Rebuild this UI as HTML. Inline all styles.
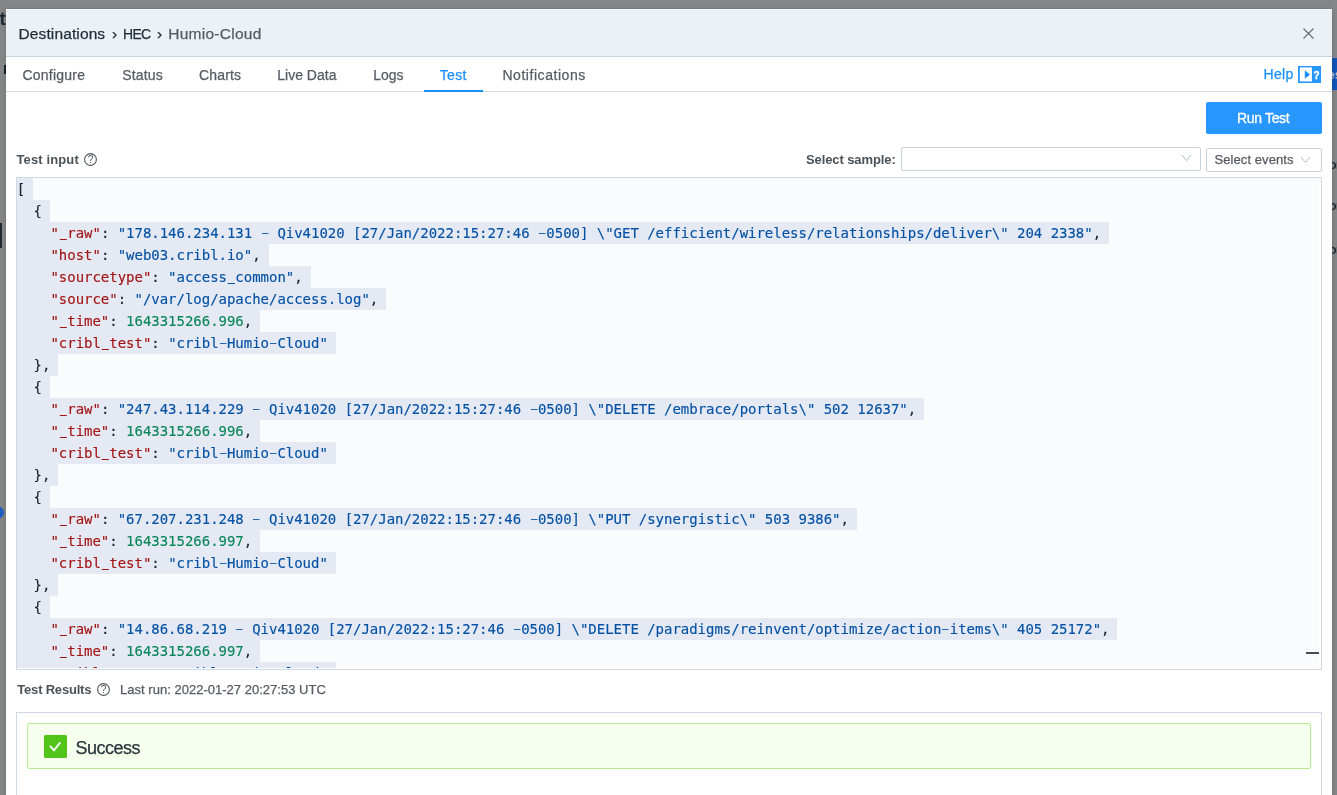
<!DOCTYPE html>
<html lang="en">
<head>
<meta charset="utf-8">
<title>Destinations › HEC › Humio-Cloud</title>
<style>
html,body{margin:0;padding:0;}
body{width:1337px;height:795px;overflow:hidden;background:#838587;font-family:"Liberation Sans",sans-serif;color:#4a5359;position:relative;}
.abs{position:absolute;white-space:nowrap;}
#modal{position:absolute;left:6px;top:9px;width:1326px;height:800px;background:#fff;border-radius:2px 2px 0 0;box-shadow:0 0 3px rgba(0,0,0,0.22);}
.bg{position:absolute;}
#hdr{position:absolute;left:0;top:0;width:1326px;height:47px;background:#ecf1f5;border-bottom:1px solid #c9d5e1;}
#tabs{position:absolute;left:0;top:48px;width:1326px;height:34px;border-bottom:1px solid #d0dae4;}
.t{position:absolute;white-space:nowrap;line-height:1;-webkit-text-stroke:0.25px currentColor;}
.title{font-size:15.5px;top:16.5px;color:#1f2c38;}
.tab{font-size:14px;top:59px;color:#555c63;}
#ink{position:absolute;left:418px;top:81px;width:59px;height:2px;background:#1890ff;}
#run{position:absolute;left:1200px;top:93px;width:116px;height:32px;background:#2896ff;border-radius:2px;color:#fff;font-size:14px;text-align:center;line-height:32px;letter-spacing:-0.35px;padding-right:1.6px;box-sizing:border-box;-webkit-text-stroke:0.3px #fff;}
.lbl{font-size:13px;font-weight:bold;color:#4a5359;-webkit-text-stroke:0 !important;}
.selbox{position:absolute;height:22px;border:1px solid #c6d2de;border-radius:2px;background:#fff;}
#editor{position:absolute;left:10px;top:168px;width:1304px;height:491px;border:1px solid #cfd9e3;background:#fff;overflow:hidden;}
#mon{position:absolute;left:0;top:0;width:1302px;height:490px;background:#fafbfd;overflow:hidden;}
#editor .sel{position:absolute;left:0;height:22px;background:#e5e9f3;display:block;}
#editor .ln{position:absolute;left:-0.2px;height:22px;line-height:22px;white-space:pre;font-family:"DejaVu Sans Mono","Liberation Mono",monospace;font-size:14px;letter-spacing:-0.024px;color:#1a1a1a;-webkit-text-stroke:0.14px currentColor;}
.u{font-weight:normal;display:inline-block;position:relative;top:-1.6px;transform:scaleX(0.78);-webkit-text-stroke:0.5px currentColor}.h{font-weight:normal;display:inline-block;position:relative;top:-1px;transform:scale(1.83,0.8);-webkit-text-stroke:0}
.k{color:#a31515}.s{color:#0451a5}.n{color:#098658}.d{color:#1d2228}
#results{position:absolute;left:10px;top:703px;width:1304px;height:120px;border:1px solid #cfd9e3;background:#fff;}
#alert{position:absolute;left:21px;top:714px;width:1282px;height:44px;border:1px solid #b7eb8f;background:#f6ffed;border-radius:2px;}
</style>
</head>
<body>
<div id="bgl" style="position:absolute;left:0;top:0;width:1337px;height:795px;will-change:transform">
<div class="bg" style="left:-30px;width:35.8px;text-align:right;top:8.5px;font-size:19px;font-weight:bold;color:#1c2a35;line-height:1;white-space:nowrap">t</div>
<div class="bg" style="left:4px;top:65px;width:2px;height:9px;background:#16242e"></div>
<div class="bg" style="left:0;top:223px;width:1.5px;height:25px;background:#1d2b35"></div>
<div class="bg" style="left:-9px;top:506px;width:13px;height:13px;border-radius:50%;background:#1f5fc4"></div>
<div class="bg" style="left:1332px;top:58px;width:5px;height:32px;background:#1253b5"></div>
<div class="bg" style="left:1327.5px;top:67.5px;font-size:13px;font-weight:bold;color:#b9bec6;line-height:1;white-space:nowrap">es</div>
<div class="bg" style="left:1329.2px;letter-spacing:-0.6px;top:159.2px;font-size:12px;font-weight:bold;color:#1c2a35;line-height:1;white-space:nowrap">on</div>
<div class="bg" style="left:1329.2px;letter-spacing:-0.6px;top:199.5px;font-size:12px;font-weight:bold;color:#1c2a35;line-height:1;white-space:nowrap">on</div>
<div class="bg" style="left:1329.2px;letter-spacing:-0.6px;top:244.3px;font-size:12px;font-weight:bold;color:#1c2a35;line-height:1;white-space:nowrap">on</div>
</div>
<div id="modal">
  <div id="hdr"><div style="height:1px;background:#f3f7fa"></div></div>
  <div id="tabs"></div>
  <div id="results"></div>
  <div id="alert"></div>
  <div id="gl" style="position:absolute;left:0;top:0;width:1326px;height:800px;will-change:transform;">
  <span class="t title" style="left:12.5px;letter-spacing:0.12px">Destinations</span>
  <span class="t title" style="left:106px">›</span>
  <span class="t title" style="left:116.6px;letter-spacing:-0.75px;transform:scaleX(0.9);transform-origin:0 0">HEC</span>
  <span class="t title" style="left:151px">›</span>
  <span class="t title" style="left:162.3px;color:#555c63;letter-spacing:0.25px">Humio-Cloud</span>
  <svg class="abs" style="left:1296px;top:18px" width="13" height="13" viewBox="0 0 13 13"><path d="M1.5 1.5 L11.5 11.5 M11.5 1.5 L1.5 11.5" stroke="#6b7075" stroke-width="1.2" fill="none"/></svg>
  <span class="t tab" style="left:16.5px;letter-spacing:0.22px">Configure</span>
  <span class="t tab" style="left:116.2px;letter-spacing:0.17px">Status</span>
  <span class="t tab" style="left:193px;letter-spacing:0.17px">Charts</span>
  <span class="t tab" style="left:271.3px">Live Data</span>
  <span class="t tab" style="left:367.2px">Logs</span>
  <span class="t tab" style="left:433.8px;color:#1890ff;letter-spacing:0.3px">Test</span>
  <span class="t tab" style="left:496.4px;letter-spacing:0.55px">Notifications</span>
  <div id="ink"></div>
  <span class="t tab" style="left:1257.5px;top:58.2px;color:#1890ff;letter-spacing:0.3px">Help</span>
  <svg class="abs" style="left:1292px;top:57px" width="23" height="17" viewBox="0 0 23 17"><rect x="0" y="0" width="23" height="17" fill="#2896ff"/><rect x="1.8" y="1.4" width="12.1" height="14" fill="#fff"/><path d="M6.8 4.2 L12 8.5 L6.8 12.8 Z" fill="#1890ff"/><text x="18.5" y="12.8" font-family="Liberation Sans, sans-serif" font-size="10" font-weight="bold" fill="#fff" stroke="#fff" stroke-width="0.35" text-anchor="middle">?</text></svg>
  <div id="run">Run Test</div>

  <span class="t lbl" style="left:10.5px;top:143.5px;letter-spacing:0.12px">Test input</span>
  <svg class="abs" style="left:78.2px;top:144px" width="13" height="13" viewBox="0 0 13 13"><circle cx="6.5" cy="6.5" r="5.9" fill="none" stroke="#50575e" stroke-width="1.1"/><text x="6.5" y="10.1" font-family="Liberation Sans, sans-serif" font-size="10.3" fill="#50575e" text-anchor="middle">?</text></svg>
  <span class="t lbl" style="left:800px;top:143.5px;letter-spacing:-0.1px">Select sample:</span>
  <div class="selbox" style="left:895px;top:138px;width:298px"></div>
  <svg class="abs" style="left:1175px;top:145px" width="11" height="8" viewBox="0 0 11 8"><path d="M1 1 L5.5 6.5 L10 1" stroke="#b3b9bf" stroke-width="1" fill="none"/></svg>
  <div class="selbox" style="left:1200px;top:139px;width:114px"></div>
  <span class="t" style="left:1208.5px;top:143.5px;font-size:13px;color:#555c63;letter-spacing:0.08px">Select events</span>
  <svg class="abs" style="left:1294.1px;top:147px" width="11" height="8" viewBox="0 0 11 8"><path d="M1 1 L5.5 6.5 L10 1" stroke="#b3b9bf" stroke-width="1" fill="none"/></svg>

  <div id="editor"><div id="mon">
<i class="sel" style="top:0px;width:16.2px"></i>
<i class="sel" style="top:22px;width:33.0px"></i>
<i class="sel" style="top:44px;width:1091.8px"></i>
<i class="sel" style="top:66px;width:251.5px"></i>
<i class="sel" style="top:88px;width:293.5px"></i>
<i class="sel" style="top:110px;width:369.1px"></i>
<i class="sel" style="top:132px;width:243.1px"></i>
<i class="sel" style="top:154px;width:318.7px"></i>
<i class="sel" style="top:176px;width:41.4px"></i>
<i class="sel" style="top:198px;width:33.0px"></i>
<i class="sel" style="top:220px;width:906.9px"></i>
<i class="sel" style="top:242px;width:243.1px"></i>
<i class="sel" style="top:264px;width:318.7px"></i>
<i class="sel" style="top:286px;width:41.4px"></i>
<i class="sel" style="top:308px;width:33.0px"></i>
<i class="sel" style="top:330px;width:839.7px"></i>
<i class="sel" style="top:352px;width:243.1px"></i>
<i class="sel" style="top:374px;width:318.7px"></i>
<i class="sel" style="top:396px;width:41.4px"></i>
<i class="sel" style="top:418px;width:33.0px"></i>
<i class="sel" style="top:440px;width:1100.2px"></i>
<i class="sel" style="top:462px;width:243.1px"></i>
<i class="sel" style="top:484px;width:318.7px"></i>
<div class="ln" style="top:0px"><span class="d">[</span></div>
<div class="ln" style="top:22px"><span class="d">  {</span></div>
<div class="ln" style="top:44px">    <span class="k">&quot;<b class="u">_</b>raw&quot;</span><span class="d">: </span><span class="s">&quot;178.146.234.131 <b class="h">-</b> Qiv41020 [27/Jan/2022:15:27:46 <b class="h">-</b>0500] \&quot;GET /efficient/wireless/relationships/deliver\&quot; 204 2338&quot;</span><span class="d">,</span></div>
<div class="ln" style="top:66px">    <span class="k">&quot;host&quot;</span><span class="d">: </span><span class="s">&quot;web03.cribl.io&quot;</span><span class="d">,</span></div>
<div class="ln" style="top:88px">    <span class="k">&quot;sourcetype&quot;</span><span class="d">: </span><span class="s">&quot;access<b class="u">_</b>common&quot;</span><span class="d">,</span></div>
<div class="ln" style="top:110px">    <span class="k">&quot;source&quot;</span><span class="d">: </span><span class="s">&quot;/var/log/apache/access.log&quot;</span><span class="d">,</span></div>
<div class="ln" style="top:132px">    <span class="k">&quot;<b class="u">_</b>time&quot;</span><span class="d">: </span><span class="n">1643315266.996</span><span class="d">,</span></div>
<div class="ln" style="top:154px">    <span class="k">&quot;cribl<b class="u">_</b>test&quot;</span><span class="d">: </span><span class="s">&quot;cribl<b class="h">-</b>Humio<b class="h">-</b>Cloud&quot;</span></div>
<div class="ln" style="top:176px"><span class="d">  },</span></div>
<div class="ln" style="top:198px"><span class="d">  {</span></div>
<div class="ln" style="top:220px">    <span class="k">&quot;<b class="u">_</b>raw&quot;</span><span class="d">: </span><span class="s">&quot;247.43.114.229 <b class="h">-</b> Qiv41020 [27/Jan/2022:15:27:46 <b class="h">-</b>0500] \&quot;DELETE /embrace/portals\&quot; 502 12637&quot;</span><span class="d">,</span></div>
<div class="ln" style="top:242px">    <span class="k">&quot;<b class="u">_</b>time&quot;</span><span class="d">: </span><span class="n">1643315266.996</span><span class="d">,</span></div>
<div class="ln" style="top:264px">    <span class="k">&quot;cribl<b class="u">_</b>test&quot;</span><span class="d">: </span><span class="s">&quot;cribl<b class="h">-</b>Humio<b class="h">-</b>Cloud&quot;</span></div>
<div class="ln" style="top:286px"><span class="d">  },</span></div>
<div class="ln" style="top:308px"><span class="d">  {</span></div>
<div class="ln" style="top:330px">    <span class="k">&quot;<b class="u">_</b>raw&quot;</span><span class="d">: </span><span class="s">&quot;67.207.231.248 <b class="h">-</b> Qiv41020 [27/Jan/2022:15:27:46 <b class="h">-</b>0500] \&quot;PUT /synergistic\&quot; 503 9386&quot;</span><span class="d">,</span></div>
<div class="ln" style="top:352px">    <span class="k">&quot;<b class="u">_</b>time&quot;</span><span class="d">: </span><span class="n">1643315266.997</span><span class="d">,</span></div>
<div class="ln" style="top:374px">    <span class="k">&quot;cribl<b class="u">_</b>test&quot;</span><span class="d">: </span><span class="s">&quot;cribl<b class="h">-</b>Humio<b class="h">-</b>Cloud&quot;</span></div>
<div class="ln" style="top:396px"><span class="d">  },</span></div>
<div class="ln" style="top:418px"><span class="d">  {</span></div>
<div class="ln" style="top:440px">    <span class="k">&quot;<b class="u">_</b>raw&quot;</span><span class="d">: </span><span class="s">&quot;14.86.68.219 <b class="h">-</b> Qiv41020 [27/Jan/2022:15:27:46 <b class="h">-</b>0500] \&quot;DELETE /paradigms/reinvent/optimize/action<b class="h">-</b>items\&quot; 405 25172&quot;</span><span class="d">,</span></div>
<div class="ln" style="top:462px">    <span class="k">&quot;<b class="u">_</b>time&quot;</span><span class="d">: </span><span class="n">1643315266.997</span><span class="d">,</span></div>
<div class="ln" style="top:484px">    <span class="k">&quot;cribl<b class="u">_</b>test&quot;</span><span class="d">: </span><span class="s">&quot;cribl<b class="h">-</b>Humio<b class="h">-</b>Cloud&quot;</span></div>
    <div style="position:absolute;left:1289px;top:473px;width:13px;height:4px;background:#fff"></div>
    <div style="position:absolute;left:1289px;top:474px;width:13px;height:2px;background:#464c52"></div>
  </div></div>

  <span class="t lbl" style="left:11.3px;top:673.8px;letter-spacing:-0.2px">Test Results</span>
  <svg class="abs" style="left:91px;top:674.2px" width="13" height="13" viewBox="0 0 13 13"><circle cx="6.5" cy="6.5" r="5.9" fill="none" stroke="#50575e" stroke-width="1.1"/><text x="6.5" y="10.1" font-family="Liberation Sans, sans-serif" font-size="10.3" fill="#50575e" text-anchor="middle">?</text></svg>
  <span class="t" style="left:114px;top:673.8px;font-size:13px;color:#555c63;letter-spacing:0.02px">Last run: 2022-01-27 20:27:53 UTC</span>
  <svg class="abs" style="left:38px;top:726px" width="23" height="23" viewBox="0 0 23 23"><rect width="23" height="23" rx="1.5" fill="#52c41a"/><path d="M5.9 10.9 L10 15.4 L16.3 7.4" stroke="#fff" stroke-width="1.9" fill="none"/></svg>
  <span class="t" style="left:69.5px;top:729.7px;font-size:18px;color:#2a343d;letter-spacing:-0.5px">Success</span>
</div></div>
</body>
</html>
